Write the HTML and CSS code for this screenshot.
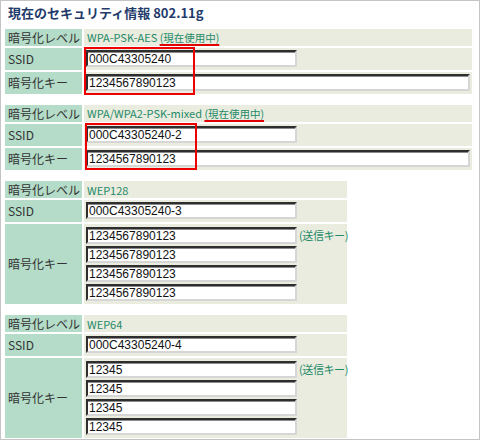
FILE: index.html
```html
<!DOCTYPE html>
<html lang="ja">
<head>
<meta charset="utf-8">
<link rel="stylesheet" href="styles.css">
</head>
<body>
<div class="frame">
  <h1 class="title">現在のセキュリティ情報 802.11g</h1>

  <table class="sec wide">
    <tr><th class="lab">暗号化レベル</th><td class="level">WPA-PSK-AES <span class="inuse">(現在使用中)</span></td></tr>
    <tr><th class="lab">SSID</th><td class="val"><input class="field short" value="000C43305240"></td></tr>
    <tr><th class="lab">暗号化キー</th><td class="val"><input class="field long" value="1234567890123"></td></tr>
  </table>

  <table class="sec wide">
    <tr><th class="lab">暗号化レベル</th><td class="level">WPA/WPA2-PSK-mixed <span class="inuse">(現在使用中)</span></td></tr>
    <tr><th class="lab">SSID</th><td class="val"><input class="field short" value="000C43305240-2"></td></tr>
    <tr><th class="lab">暗号化キー</th><td class="val"><input class="field long" value="1234567890123"></td></tr>
  </table>

  <table class="sec narrow">
    <tr><th class="lab">暗号化レベル</th><td class="level">WEP128</td></tr>
    <tr><th class="lab">SSID</th><td class="val"><input class="field short" value="000C43305240-3"></td></tr>
    <tr><th class="lab">暗号化キー</th><td class="val keys">
      <div class="keyrow">
        <div class="keylist">
          <input class="field short" value="1234567890123">
          <input class="field short" value="1234567890123">
          <input class="field short" value="1234567890123">
          <input class="field short" value="1234567890123">
        </div>
        <span class="txkey">(送信キー)</span>
      </div>
    </td></tr>
  </table>

  <table class="sec narrow">
    <tr><th class="lab">暗号化レベル</th><td class="level">WEP64</td></tr>
    <tr><th class="lab">SSID</th><td class="val"><input class="field short" value="000C43305240-4"></td></tr>
    <tr><th class="lab">暗号化キー</th><td class="val keys">
      <div class="keyrow">
        <div class="keylist">
          <input class="field short" value="12345">
          <input class="field short" value="12345">
          <input class="field short" value="12345">
          <input class="field short" value="12345">
        </div>
        <span class="txkey">(送信キー)</span>
      </div>
    </td></tr>
  </table>

  <div class="mark mark-a"></div>
  <div class="mark mark-b"></div>
</div>
</body>
</html>
```

FILE: styles.css
```css
html, body {
  margin: 0;
  padding: 0;
  background: #ffffff;
}

.frame {
  position: relative;
  box-sizing: border-box;
  width: 480px;
  height: 440px;
  border: 1px solid #c4c4c4;
  padding: 0 5px 0 2px;
  font-family: "Noto Sans CJK JP", "Liberation Sans", sans-serif;
  overflow: hidden;
}

.title {
  margin: 0;
  height: 26px;
  box-sizing: border-box;
  padding: 3px 0 0 5px;
  font-size: 13px;
  line-height: 18px;
  font-weight: bold;
  color: #1f3b6b;
}

.sec {
  border-collapse: separate;
  border-spacing: 2px;
  table-layout: fixed;
  margin: 0 0 7px 0;
}

.wide { width: 471px; }
.narrow { width: 346px; }

.lab {
  width: 77px;
  box-sizing: border-box;
  background: #b4dcc8;
  color: #333333;
  font-weight: normal;
  text-align: left;
  font-size: 12px;
  line-height: 14px;
  padding: 0 0 0 3px;
  white-space: nowrap;
}

.level {
  background: #e9ecdf;
  height: 17px;
  padding: 0 0 0 3px;
  font-size: 11px;
  line-height: 14px;
  color: #1f8a68;
  white-space: nowrap;
}

.inuse {
  font-size: 10.5px;
  text-decoration-line: underline;
  text-decoration-color: #e00000;
  text-decoration-thickness: 2px;
  text-underline-offset: 2px;
}

.val {
  background: #e9ecdf;
  padding: 2px 2px 3px 2px;
  height: 17px;
}

.field {
  display: block;
  box-sizing: border-box;
  height: 17px;
  margin: 0;
  padding: 0 0 0 1px;
  border-style: solid;
  border-width: 2px;
  border-color: #2e2e2e #d6d6d6 #d6d6d6 #2e2e2e;
  box-shadow: inset 0 1px 0 #8a8a8a;
  background: #ffffff;
  font-family: "Liberation Sans", sans-serif;
  font-size: 12px;
  color: #111111;
  outline: none;
}

.short { width: 211px; }
.long { width: 384px; }

.keys {
  padding: 3px 2px 3px 2px;
}

.keyrow {
  display: flex;
  align-items: flex-start;
  gap: 2px;
}

.keylist {
  display: flex;
  flex-direction: column;
  gap: 2px;
}

.txkey {
  font-size: 11px;
  line-height: 17px;
  color: #1f8a68;
  white-space: nowrap;
  letter-spacing: -0.4px;
}

.mark {
  position: absolute;
  box-sizing: border-box;
  border: 2px solid #ee0000;
}

.mark-a {
  left: 83px;
  top: 46px;
  width: 111px;
  height: 48px;
}

.mark-b {
  left: 84px;
  top: 122px;
  width: 112px;
  height: 47px;
}
```
